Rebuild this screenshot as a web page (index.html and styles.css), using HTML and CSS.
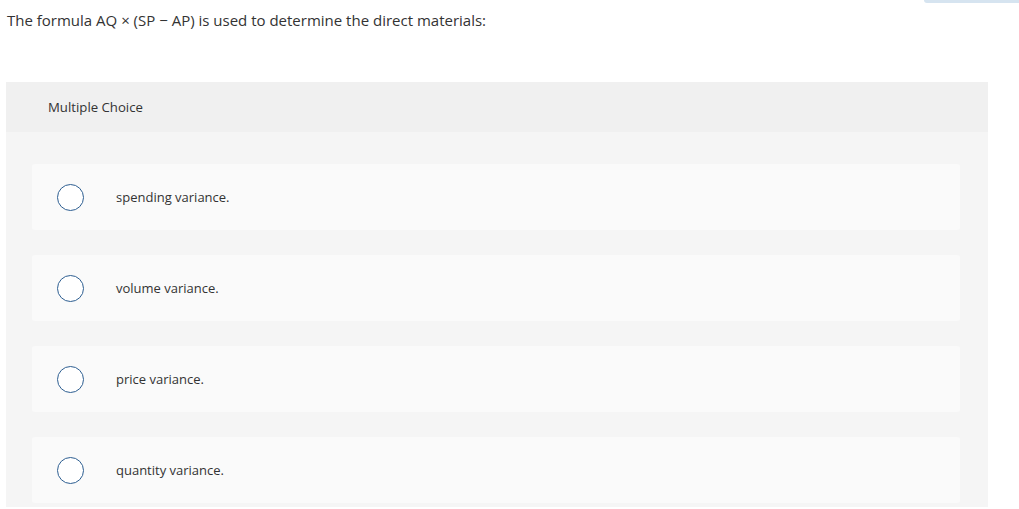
FILE: index.html
```html
<!DOCTYPE html>
<html>
<head>
<meta charset="utf-8">
<link rel="stylesheet" href="styles.css">
</head>
<body>
<div class="topbar"></div>
<p class="question">The formula AQ × (SP − AP) is used to determine the direct materials:</p>
<section class="panel">
  <div class="panel-head">Multiple Choice</div>
  <div class="panel-body">
    <div class="option"><span class="radio"></span><span class="label">spending variance.</span></div>
    <div class="option"><span class="radio"></span><span class="label">volume variance.</span></div>
    <div class="option"><span class="radio"></span><span class="label">price variance.</span></div>
    <div class="option"><span class="radio"></span><span class="label">quantity variance.</span></div>
  </div>
</section>
</body>
</html>
```
FILE: styles.css
```css
html, body { margin: 0; padding: 0; background: #fff; }
body {
  font-family: "Open Sans", "Lato", sans-serif;
  color: #333;
  width: 1019px;
  height: 509px;
  overflow: hidden;
  position: relative;
}
.topbar {
  position: absolute;
  top: 0;
  left: 924px;
  width: 95px;
  height: 3px;
  background: #d6e4f0;
  border-bottom-left-radius: 3px;
}
.question {
  margin: 0;
  padding: 11px 0 0 7px;
  font-size: 15px;
  line-height: 18px;
  height: 82px;
  box-sizing: border-box;
}
.panel {
  margin-left: 6px;
  width: 982px;
  background: #f5f5f5;
}
.panel-head {
  background: #f0f0f0;
  height: 50px;
  display: flex;
  align-items: center;
  padding-left: 42px;
  font-size: 13.2px;
}
.panel-body {
  padding: 32px 28px 4px 26px;
  display: flex;
  flex-direction: column;
  gap: 25px;
}
.option {
  height: 66px;
  background: #fafafa;
  border-radius: 3px;
  display: flex;
  align-items: center;
  padding-left: 25px;
}
.radio {
  width: 25px;
  height: 25px;
  border: 1.5px solid #2d5e91;
  border-radius: 50%;
  background: #fff;
  flex: none;
}
.label {
  margin-left: 32px;
  font-size: 13px;
}
```
